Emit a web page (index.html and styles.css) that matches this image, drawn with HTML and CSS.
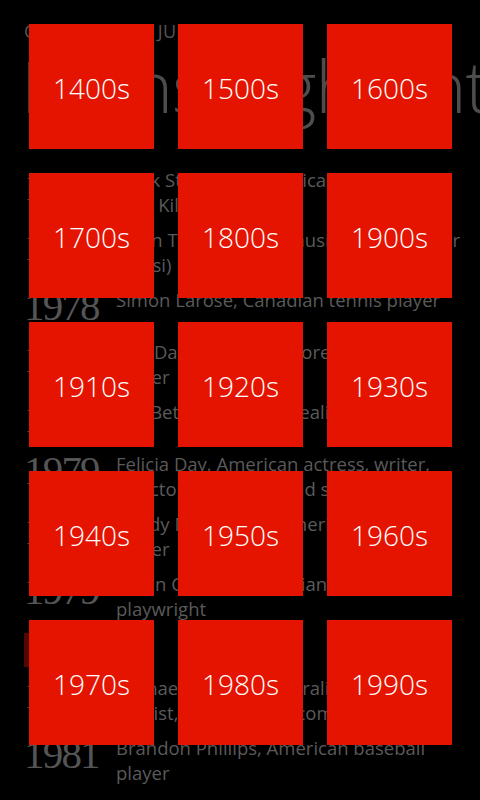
FILE: index.html
```html
<!DOCTYPE html>
<html lang="en">

<head>
    <meta charset="utf-8">
    <meta name="viewport" content="width=device-width, initial-scale=1.0">
    <title>Births - 28 June</title>
    <link rel="stylesheet" href="styles.css">
</head>

<body>
    <div class="page">
        <div class="app-title">Calendar: 28 June</div>
        <div class="page-title">Births highlights</div>

        <div class="list">
            <div class="item">
                <div class="year">1977</div>
                <div class="text">Mark Stoermer, American bass player (The Killers)</div>
            </div>
            <div class="item">
                <div class="year">1977</div>
                <div class="text">Arjun Tiwari, Indian musician and singer (Bassi)</div>
            </div>
            <div class="item">
                <div class="year">1978</div>
                <div class="text">Simon Larose, Canadian tennis player</div>
            </div>
            <div class="item">
                <div class="year">1978</div>
                <div class="text">Kim Dai-won, South Korean baseball player</div>
            </div>
            <div class="item">
                <div class="year">1978</div>
                <div class="text">Ola Bettini, Swedish realist painter</div>
            </div>
            <div class="item">
                <div class="year">1979</div>
                <div class="text">Felicia Day, American actress, writer, director, producer, and singer</div>
            </div>
            <div class="item">
                <div class="year">1979</div>
                <div class="text">Randy Messenger, American baseball player</div>
            </div>
            <div class="item">
                <div class="year">1979</div>
                <div class="text">Bryan Cranley, Canadian novelist and playwright</div>
            </div>

            <div class="group-header">1980s</div>

            <div class="item">
                <div class="year">1980</div>
                <div class="text">Michael Paynter, Australian singer and pianist, guitarist and composer</div>
            </div>
            <div class="item">
                <div class="year">1981</div>
                <div class="text">Brandon Phillips, American baseball player</div>
            </div>
            <div class="item">
                <div class="year">1981</div>
                <div class="text">Mara Santangelo, Italian tennis player</div>
            </div>
        </div>
    </div>

    <!-- jump list opened over the page -->
    <div class="jump-list">
        <div class="tile">1400s</div>
        <div class="tile">1500s</div>
        <div class="tile">1600s</div>
        <div class="tile">1700s</div>
        <div class="tile">1800s</div>
        <div class="tile">1900s</div>
        <div class="tile">1910s</div>
        <div class="tile">1920s</div>
        <div class="tile">1930s</div>
        <div class="tile">1940s</div>
        <div class="tile">1950s</div>
        <div class="tile">1960s</div>
        <div class="tile">1970s</div>
        <div class="tile">1980s</div>
        <div class="tile">1990s</div>
    </div>
</body>

</html>
```

FILE: styles.css
```css
body {
    font-family: "Open Sans", "Noto Sans", sans-serif;
    margin: 0;
    padding: 0;
    background-color: #000;
    height: 800px;
    overflow: hidden;
}

.page {
    padding: 19px 0 0 24px;
    height: 781px;
    overflow: hidden;
}

.app-title {
    font-size: 18px;
    line-height: 24px;
    color: #555;
    text-transform: uppercase;
    letter-spacing: 0.6px;
}

.page-title {
    font-size: 72px;
    font-weight: 300;
    line-height: 80px;
    margin: 2px 0 0 -3px;
    color: #4d4d4d;
    white-space: nowrap;
    letter-spacing: -1px;
}

.list {
    margin-top: 42px;
}

.item {
    display: flex;
    min-height: 42px;
    margin-bottom: 10px;
    padding-right: 18px;
}

.year {
    flex: none;
    width: 92px;
    font-family: "Liberation Serif", serif;
    font-size: 41px;
    line-height: 38px;
    letter-spacing: -1.8px;
    color: #555;
}

.text {
    font-size: 18.5px;
    line-height: 25px;
    color: #5a5a5a;
}

.group-header {
    width: 90px;
    height: 34px;
    margin: 12px 0 8px;
    background-color: #520800;
    color: #6a3a33;
    font-size: 18px;
    line-height: 34px;
    text-indent: 8px;
}

.jump-list {
    position: absolute;
    top: 0;
    left: 0;
    right: 0;
    bottom: 0;
    display: grid;
    grid-template-columns: repeat(3, 125px);
    grid-auto-rows: 125px;
    gap: 24px;
    padding: 24px 0 0 29px;
    align-content: start;
}

.tile {
    display: flex;
    align-items: center;
    justify-content: center;
    padding-top: 2px;
    background-color: #e51400;
    color: #fff;
    font-size: 28px;
    font-weight: 300;
}
```
